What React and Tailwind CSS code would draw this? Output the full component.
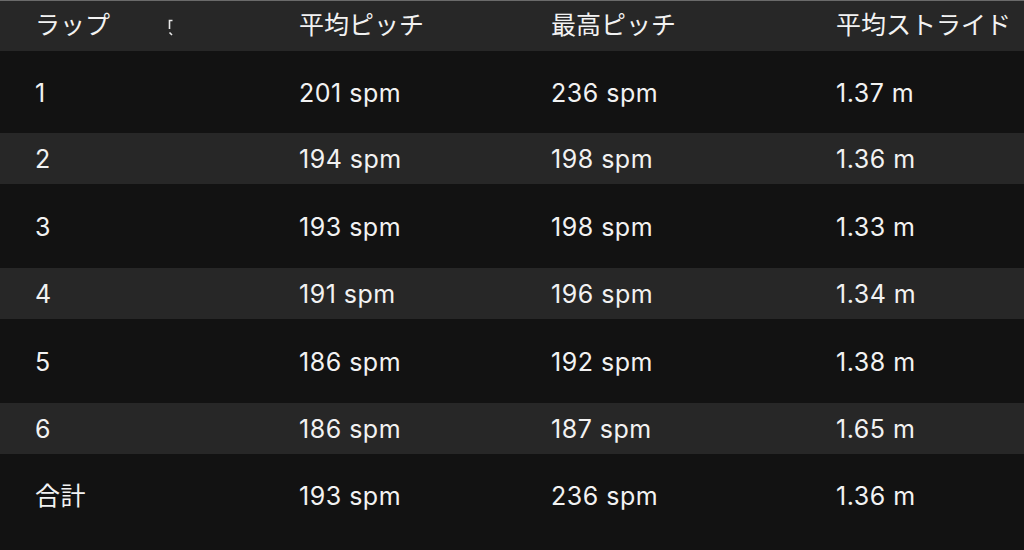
import React from 'react'

const rows = [
  { lap: '1', avg: '201 spm', max: '236 spm', stride: '1.37 m', h: 'h-[82px]', bg: 'bg-[#121212]' },
  { lap: '2', avg: '194 spm', max: '198 spm', stride: '1.36 m', h: 'h-[51px]', bg: 'bg-[#272727]' },
  { lap: '3', avg: '193 spm', max: '198 spm', stride: '1.33 m', h: 'h-[84px]', bg: 'bg-[#121212]' },
  { lap: '4', avg: '191 spm', max: '196 spm', stride: '1.34 m', h: 'h-[51px]', bg: 'bg-[#272727]' },
  { lap: '5', avg: '186 spm', max: '192 spm', stride: '1.38 m', h: 'h-[84px]', bg: 'bg-[#121212]' },
  { lap: '6', avg: '186 spm', max: '187 spm', stride: '1.65 m', h: 'h-[51px]', bg: 'bg-[#272727]' },
  { lap: '合計', avg: '193 spm', max: '236 spm', stride: '1.36 m', h: 'h-[82px]', bg: 'bg-[#121212]' },
]

const cols = 'grid grid-cols-[264px_252px_285px_1fr] items-center pl-[35px]'

export default function App() {
  return (
    <div className="w-[1024px] h-[550px] overflow-hidden bg-[#121212] text-[#f2f2f2] text-[25px] font-['Inter','Noto_Sans_CJK_JP',sans-serif]">
      {/* Header */}
      <div className={`${cols} h-[51px] bg-[#272727] border-t border-[#6a6a6a] whitespace-nowrap`}>
        <div className="flex items-center">
          <span>ラップ</span>
          <svg className="ml-[58px] mt-[3px]" width="8" height="18" viewBox="0 0 8 18">
            <path d="M1.5 10V1.5H4.5" stroke="#e8e8e8" strokeWidth="1.6" fill="none" />
            <path d="M1.5 13.5L4 16" stroke="#e8e8e8" strokeWidth="1.6" fill="none" />
          </svg>
        </div>
        <span>平均ピッチ</span>
        <span>最高ピッチ</span>
        <span>平均ストライド</span>
      </div>

      {rows.map(r => (
        <div key={r.lap} className={`${cols} ${r.h} ${r.bg} pt-[3px] tracking-[0.02em]`}>
          <span>{r.lap}</span>
          <span>{r.avg}</span>
          <span>{r.max}</span>
          <span>{r.stride}</span>
        </div>
      ))}
    </div>
  )
}
